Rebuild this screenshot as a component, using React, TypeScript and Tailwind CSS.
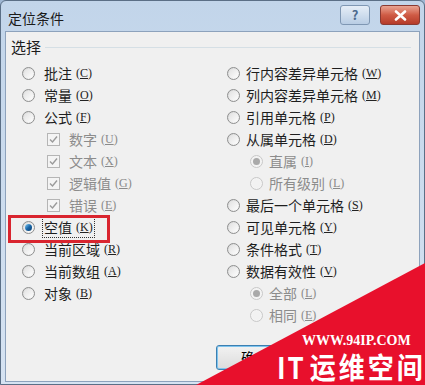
import React from "react";

const F = { fontFamily: '"Noto Sans CJK SC", "Noto Sans", sans-serif' } as React.CSSProperties;

function Mn({ k, dis }: { k: string; dis?: boolean }) {
  return (
    <span className={`ml-[4px] text-[12px] ${dis ? "text-[#8a8a8a]" : "text-[#222]"}`} style={{ fontFamily: '"Liberation Serif", "DejaVu Serif", serif' }}>
      (<span className="underline">{k}</span>)
    </span>
  );
}

function Radio({ checked, dis }: { checked?: boolean; dis?: boolean }) {
  return (
    <span
      className={`relative inline-flex h-[13px] w-[13px] shrink-0 items-center justify-center rounded-full border ${
        dis ? "border-[#c8c8c8] bg-[#f4f4f4]" : "border-[#8e8f8f] bg-gradient-to-br from-[#d8d8d8] to-[#fbfbfb]"
      }`}
    >
      <span className={`h-[9px] w-[9px] rounded-full ${dis ? "bg-[#f2f2f2]" : "bg-gradient-to-br from-[#e2e2e2] to-[#fdfdfd]"}`} />
      {checked && (
        <span
          className={`absolute left-[2px] top-[2px] h-[7px] w-[7px] rounded-full ${
            dis ? "bg-[#a9a9a9]" : "bg-gradient-to-br from-[#7fd0f7] via-[#1a67a9] to-[#0b3f6e]"
          }`}
        />
      )}
    </span>
  );
}

function Check() {
  return (
    <span className="inline-flex h-[13px] w-[13px] shrink-0 items-center justify-center border border-[#b5b5b5] bg-[#f4f4f4]">
      <svg width="9" height="9" viewBox="0 0 9 9">
        <path d="M1 4.5 L3.5 7 L8 1.5" stroke="#9a9a9a" strokeWidth="1.4" fill="none" />
      </svg>
    </span>
  );
}

type Item = { t: string; k: string; kind: "r" | "c"; indent?: boolean; dis?: boolean; checked?: boolean; focus?: boolean };

function Row({ it, gap, ind }: { it: Item; gap: string; ind: string }) {
  return (
    <div className={`flex h-[22px] items-center ${it.indent ? ind : ""}`}>
      {it.kind === "r" ? <Radio checked={it.checked} dis={it.dis} /> : <Check />}
      <span
        className={`${gap} flex items-center text-[14px] leading-[18px] ${it.dis ? "text-[#8c8c8c]" : "text-[#1e1e1e]"} ${
          it.focus ? "outline outline-1 outline-dotted outline-[#333] outline-offset-[1px]" : ""
        }`}
      >
        {it.t}
        <Mn k={it.k} dis={it.dis} />
      </span>
    </div>
  );
}

const left: Item[] = [
  { t: "批注", k: "C", kind: "r" },
  { t: "常量", k: "O", kind: "r" },
  { t: "公式", k: "F", kind: "r" },
  { t: "数字", k: "U", kind: "c", indent: true, dis: true },
  { t: "文本", k: "X", kind: "c", indent: true, dis: true },
  { t: "逻辑值", k: "G", kind: "c", indent: true, dis: true },
  { t: "错误", k: "E", kind: "c", indent: true, dis: true },
  { t: "空值", k: "K", kind: "r", checked: true, focus: true },
  { t: "当前区域", k: "R", kind: "r" },
  { t: "当前数组", k: "A", kind: "r" },
  { t: "对象", k: "B", kind: "r" },
];

const right: Item[] = [
  { t: "行内容差异单元格", k: "W", kind: "r" },
  { t: "列内容差异单元格", k: "M", kind: "r" },
  { t: "引用单元格", k: "P", kind: "r" },
  { t: "从属单元格", k: "D", kind: "r" },
  { t: "直属", k: "I", kind: "r", indent: true, dis: true, checked: true },
  { t: "所有级别", k: "L", kind: "r", indent: true, dis: true },
  { t: "最后一个单元格", k: "S", kind: "r" },
  { t: "可见单元格", k: "Y", kind: "r" },
  { t: "条件格式", k: "T", kind: "r" },
  { t: "数据有效性", k: "V", kind: "r" },
  { t: "全部", k: "L", kind: "r", indent: true, dis: true, checked: true },
  { t: "相同", k: "E", kind: "r", indent: true, dis: true },
];

export default function App() {
  return (
    <div className="relative h-[385px] w-[425px] overflow-hidden bg-[#9fb7d3]" style={F}>
      <div className="flex h-full w-full flex-col rounded-t-[6px] border border-[#5b6f86] bg-gradient-to-b from-[#c2d5ea] to-[#d6e3f2] px-[4px] pb-[2px]">
        {/* title bar */}
        <div className="flex h-[30px] shrink-0 items-center justify-between">
          <span className="pl-[3px] pt-[5px] text-[14px] text-[#1b1b1b]">定位条件</span>
          <div className="flex items-start gap-[10px] self-start pt-[4px]">
            <div className="flex h-[20px] w-[30px] items-center justify-center rounded-[3px] border border-[#7f97b3] bg-gradient-to-b from-[#e6eef7] to-[#b9cde4] text-[13px] font-bold text-[#4d6a8d]">
              ?
            </div>
            <div className="flex h-[20px] w-[40px] items-center justify-center rounded-[3px] border border-[#8a3a32] bg-gradient-to-b from-[#e9a493] via-[#cf5b45] to-[#b53a28]">
              <svg width="13" height="11" viewBox="0 0 13 11">
                <path d="M2 1.5 L11 9.5 M11 1.5 L2 9.5" stroke="#fff" strokeWidth="2.6" strokeLinecap="round" />
              </svg>
            </div>
          </div>
        </div>
        {/* client */}
        <div className="flex flex-1 flex-col border border-[#8da2bc] bg-[#f0f0f0]">
          <div className="flex h-[30px] items-center pl-[5px] pr-[8px]">
            <span className="text-[15px] text-[#1b1b1b]">选择</span>
            <div className="ml-[4px] h-px flex-1 bg-[#d5dfe5]" />
          </div>
          <div className="flex">
            <div className="flex w-[221px] flex-col pl-[16px]">
              {left.map((it, i) => (
                <Row key={i} it={it} gap="ml-[9px]" ind="pl-[25px]" />
              ))}
            </div>
            <div className="flex flex-col">
              {right.map((it, i) => (
                <Row key={i} it={it} gap="ml-[6px]" ind="pl-[23px]" />
              ))}
            </div>
          </div>
          <div className="mt-[19px] flex gap-[8px] pl-[210px]">
            <div className="flex h-[25px] w-[78px] items-center justify-center rounded-[3px] border border-[#3c7fb1] bg-gradient-to-b from-[#f2f2f2] to-[#dcdcdc] text-[14px] shadow-[0_0_0_1px_#7ec4ee_inset]">
              确定
            </div>
            <div className="flex h-[25px] w-[78px] items-center justify-center rounded-[3px] border border-[#707070] bg-gradient-to-b from-[#f2f2f2] to-[#dcdcdc] text-[14px]">
              取消
            </div>
          </div>
        </div>
      </div>

      {/* red annotation box */}
      <div className="absolute left-[8px] top-[215px] h-[28px] w-[102px] border-[3px] border-[#d9252f]" />

      {/* watermark */}
      <svg className="absolute left-0 top-0" width="425" height="385" viewBox="0 0 425 385">
        <polygon points="196,385 425,263 425,385" fill="#e8102c" />
      </svg>
      <div
        className="absolute left-[302px] top-[334px] whitespace-nowrap text-[14px] font-bold leading-none text-white"
        style={{ fontFamily: '"Liberation Serif", "DejaVu Serif", serif' }}
      >
        WWW.94IP.COM
      </div>
      <div className="absolute left-[277px] top-[354px] flex h-[28px] origin-bottom scale-y-[1.12] items-center whitespace-nowrap text-[26px] font-bold leading-none text-white">
        <span className="mr-[4px] tracking-[2px]">IT</span>
        <span className="tracking-[3px]">运维空间</span>
      </div>
    </div>
  );
}
